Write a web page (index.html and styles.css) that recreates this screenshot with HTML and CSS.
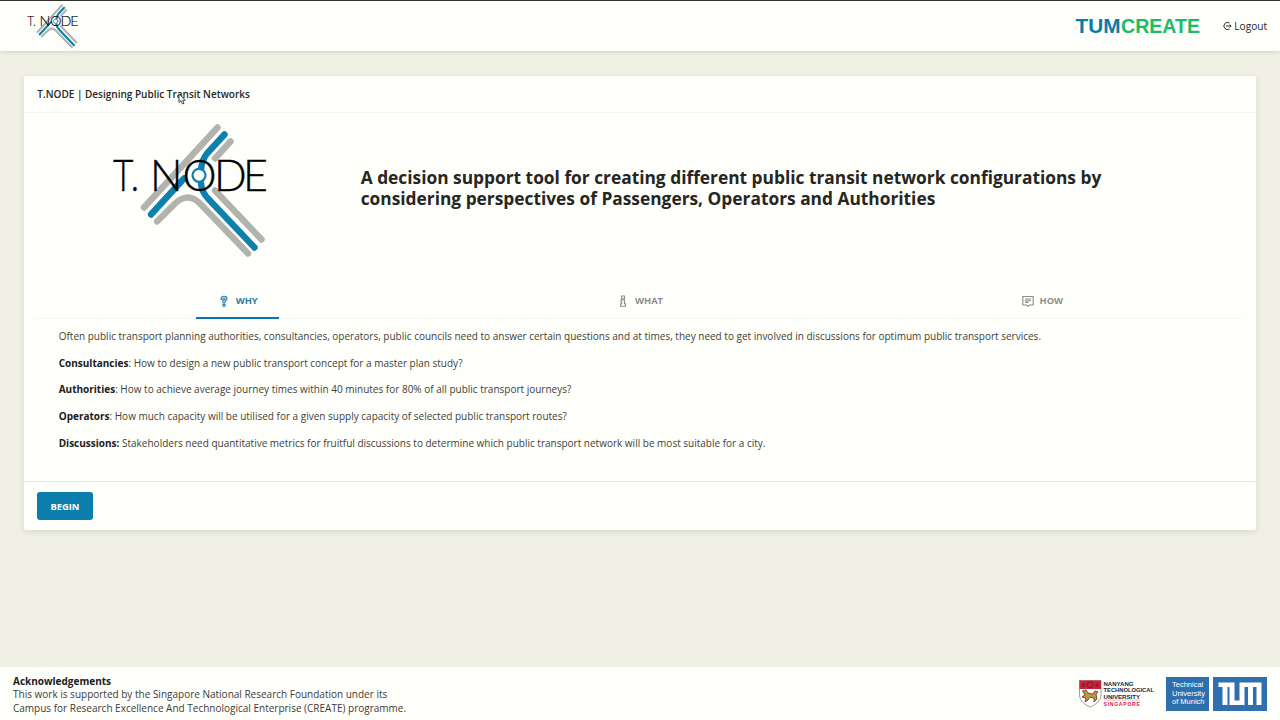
FILE: index.html
```html
<!DOCTYPE html>
<html lang="en">
<head>
<meta charset="utf-8">
<title>T.NODE</title>
<link rel="stylesheet" href="styles.css">
</head>
<body>
<svg class="defs" width="0" height="0">
  <symbol id="tnode" viewBox="0 0 156 136">
    <g fill="none" stroke-linecap="round" stroke-linejoin="round" stroke-width="6.4">
      <g stroke="#b3b3ad">
        <path d="M104.500 4.500 L31 84.500"/>
        <path d="M117.500 18.500 L102 35.500"/>
        <path d="M44 98.500 L62 80.500 Q75 68.500 87 80.500 L135 130.500"/>
        <path d="M102 67.500 L148.500 116.500"/>
      </g>
      <g stroke="#0d80ad">
        <path d="M111.500 11.500 L94 30.500 Q89 36.500 88 46.500"/>
        <path d="M38 91.500 L71 55.500"/>
        <path d="M88 60.500 Q89 69.500 95 75.500 L141.500 124.500"/>
      </g>
      <circle cx="86" cy="52.300" r="6.500" fill="#fff" stroke="#0d80ad" stroke-width="2.200"/>
    </g>
    <g class="wordmark">
      <text x="0" y="67.500" textLength="26" lengthAdjust="spacingAndGlyphs">T.</text>
      <text x="37 69.500 101 130" y="67.500">NODE</text>
    </g>
  </symbol>
</svg>
<div class="page">
  <header class="topbar">
    <svg class="logo-small"><use href="#tnode"/></svg>
    <div class="topbar-right">
      <svg class="tumcreate" viewBox="0 0 126 20"><text x="0.500" y="17" textLength="45" lengthAdjust="spacingAndGlyphs" fill="#0a7ba8">TUM</text><text x="46" y="17" textLength="79" lengthAdjust="spacingAndGlyphs" fill="#1dbb66">CREATE</text></svg>
      <a class="logout"><svg viewBox="0 0 10 10"><path d="M7.500 2 A3.600 3.600 0 1 0 7.500 8 M4 5 H9 M7.600 3.500 L9.200 5 L7.600 6.500"/></svg>Logout</a>
    </div>
  </header>
  <main class="card">
    <div class="card-head">T.NODE | Designing Public Transit Networks
      <svg class="cursor" viewBox="0 0 8 12"><path d="M1 .8 V9.500 L3 7.700 L4.400 11 L6 10.300 L4.600 7.200 H7.300 Z"/></svg>
    </div>
    <section class="hero">
      <svg class="logo-large"><use href="#tnode"/></svg>
      <h1>A decision support tool for creating different public transit network configurations by<br>considering perspectives of Passengers, Operators and Authorities</h1>
    </section>
    <nav class="tabs">
      <div class="tab active"><span><svg viewBox="0 0 12 12"><path d="M3 4.200 Q3 1.300 6 1.300 Q9 1.300 9 4 Q9 5.400 7 6.300 V8 H5 V5.500 Q7.300 4.800 7.200 4 Q7 3 6 3 Q4.800 3 4.800 4.200 Z M5 9.500 H7 V11.300 H5 Z"/></svg>WHY</span></div>
      <div class="tab"><span><svg viewBox="0 0 12 12"><path d="M4.500 1 H7.500 V3.700 H4.500 Z M4 5 H7.500 V8.700 H8.500 V11.200 H3.700 V8.700 H4.700 V7 H4 Z"/></svg>WHAT</span></div>
      <div class="tab"><span><svg viewBox="0 0 12 12"><path d="M.8 1.500 H11.200 V10 H7.500 L6 11.400 L4.500 10 H.8 Z M3 4 H9 M3 5.700 H9 M3 7.400 H6.500"/></svg>HOW</span></div>
    </nav>
    <section class="copy">
      <p>Often public transport planning authorities, consultancies, operators, public councils need to answer certain questions and at times, they need to get involved in discussions for optimum public transport services.</p>
      <p><b>Consultancies</b>: How to design a new public transport concept for a master plan study?</p>
      <p><b>Authorities</b>: How to achieve average journey times within 40 minutes for 80% of all public transport journeys?</p>
      <p><b>Operators</b>: How much capacity will be utilised for a given supply capacity of selected public transport routes?</p>
      <p><b>Discussions:</b> Stakeholders need quantitative metrics for fruitful discussions to determine which public transport network will be most suitable for a city.</p>
    </section>
    <div class="card-foot"><button>BEGIN</button></div>
  </main>
  <footer class="footer">
    <div class="ack"><b>Acknowledgements</b><br>This work is supported by the Singapore National Research Foundation under its<br>Campus for Research Excellence And Technological Enterprise (CREATE) programme.</div>
    <div class="partners">
      <svg class="ntu" viewBox="0 0 76 30">
        <path d="M.5 1.500 H22 V17 Q21 24 11.200 28 Q1.500 24 .5 17 Z" fill="#fff" stroke="#777" stroke-width=".7"/>
        <path d="M.5 1.500 H22 V10 H.5 Z" fill="#cf1f3c"/>
        <circle cx="11.200" cy="5.700" r="3" fill="none" stroke="#7a1c20"/>
        <path d="M3 4 H6 V8 H3 Z M16.500 4 H19.500 V8 H16.500 Z" fill="#8d242a"/>
        <path d="M3.500 12 L7 11 L9 14 L14 15 L16 12 L19 13 L17 15 L18 20 L15 23 L15 19 L11 18 L9 21 L6 23 L7 19 L3 18 L6 16 Z" fill="#c69343" stroke="#4b3a26" stroke-width=".8"/>
        <g class="ntu-text">
          <text x="24.500" y="7.300" textLength="30" lengthAdjust="spacingAndGlyphs">NANYANG</text>
          <text x="24.500" y="13.400" textLength="50.500" lengthAdjust="spacingAndGlyphs">TECHNOLOGICAL</text>
          <text x="24.500" y="19.500" textLength="36.500" lengthAdjust="spacingAndGlyphs">UNIVERSITY</text>
          <text class="ntu-city" x="24.500" y="26.500" textLength="36.500">SINGAPORE</text>
        </g>
        <path d="M24.500 21 H61" stroke="#d97a88" stroke-width=".5"/>
      </svg>
      <div class="tum-name">Technical<br>University<br>of Munich</div>
      <svg class="tum" viewBox="0 0 54 34"><path fill="#fff" d="M5.500 5.500 H21.500 V23.500 H26.500 V5.500 H48.500 V28 H43.500 V10 H40 V28 H35 V10 H31.500 V28 H16.500 V10 H14.500 V28 H9.500 V10 H5.500 Z"/></svg>
    </div>
  </footer>
</div>
</body>
</html>
```
FILE: styles.css
```css
* { box-sizing: border-box; }
body { margin: 0; font-family: "Open Sans", sans-serif; color: #26261f; background: #f0f1e4; }
.defs { position: absolute; }
.page { width: 1280px; height: 720px; display: flex; flex-direction: column; overflow: hidden; }
.topbar { flex: none; height: 51px; border-top: 1px solid #333; background: #fefefb; display: flex; justify-content: space-between; align-items: center; padding: 0 13px 0 27px; box-shadow: 0 1px 4px rgba(0, 21, 41, .14); }
.logo-small { width: 52px; height: 45px; }
.wordmark { font-family: Lato, sans-serif; font-weight: 300; font-size: 43px; fill: #000; stroke: #000; stroke-width: .4; }
.topbar-right { display: flex; align-items: center; gap: 21px; }
.tumcreate { width: 126px; height: 20px; font: bold 20px "Liberation Sans", sans-serif; }
.logout { display: flex; align-items: center; gap: 2px; font-size: 10.1px; }
.logout svg { width: 10px; height: 10px; fill: none; stroke: #333; stroke-width: 1; }
.card { flex: none; width: 1232px; height: 454px; margin: 25px auto 0; background: #fefefb; border-radius: 2px; box-shadow: 0 2px 6px rgba(0, 0, 0, .1); display: flex; flex-direction: column; }
.card-head { position: relative; height: 37px; padding: 0 13.300px; font-size: 10px; font-weight: 600; line-height: 37px; border-bottom: 1px solid #f5f5f1; }
.cursor { position: absolute; left: 154px; top: 17px; width: 8px; height: 12px; fill: #fff; stroke: #333; stroke-width: .9; }
.hero { height: 168px; display: flex; padding: 10px 0 0 89px; }
.logo-large { flex: none; width: 156px; height: 136px; }
h1 { margin: 44px 0 0 91.700px; font-size: 17.330px; line-height: 21.330px; font-weight: 700; white-space: nowrap; }
.tabs { height: 38px; margin: 0 13px 0 12px; display: flex; border-bottom: 1px solid #f5f5f1; }
.tab { flex: 1; display: flex; justify-content: center; font-size: 9.330px; font-weight: 700; color: #8e8e88; }
.tab span { display: flex; align-items: center; gap: 6px; height: 38px; padding: 2px 21px 0 22px; border-bottom: 2px solid transparent; }
.tab svg { width: 12px; height: 12px; margin-top: 1px; fill: none; stroke: currentColor; stroke-width: 1.1; }
.tab.active { color: #2f7ba5; }
.tab.active span { border-color: #0874b4; }
.copy { flex: 1; padding: 9px 34.700px; color: #3f3f38; }
.copy p { margin: 0 0 10.670px; font-size: 10px; line-height: 16px; white-space: nowrap; }
.copy b { color: #20201c; }
.card-foot { height: 49px; border-top: 1px solid #e8e8e6; padding: 10px 13px; }
button { display: block; width: 56px; height: 28px; border: 0; border-radius: 3px; background: #0b7eae; color: #fff; font: 700 9.330px "Open Sans", sans-serif; padding: 0; }
.footer { flex: none; margin-top: auto; height: 53px; background: #fefefb; display: flex; justify-content: space-between; padding: 0 13px; }
.ack { padding-top: 8px; font-size: 10px; line-height: 13.330px; color: #3c3c36; }
.ack b { color: #20201c; }
.partners { display: flex; padding-top: 10px; }
.ntu { width: 76px; height: 30px; margin: 2px 11px 0 0; }
.ntu-text { font: bold 6px "Liberation Sans", sans-serif; fill: #202540; }
.ntu-city { font-size: 5.200px; fill: #d8213f; }
.tum-name { width: 43px; height: 34px; margin-right: 4px; padding: 4px 0 0 6px; background: #306fae; color: #fff; font: 7.500px/8.600px "Liberation Sans", sans-serif; white-space: nowrap; }
.tum { width: 54px; height: 34px; background: #306fae; }
```
